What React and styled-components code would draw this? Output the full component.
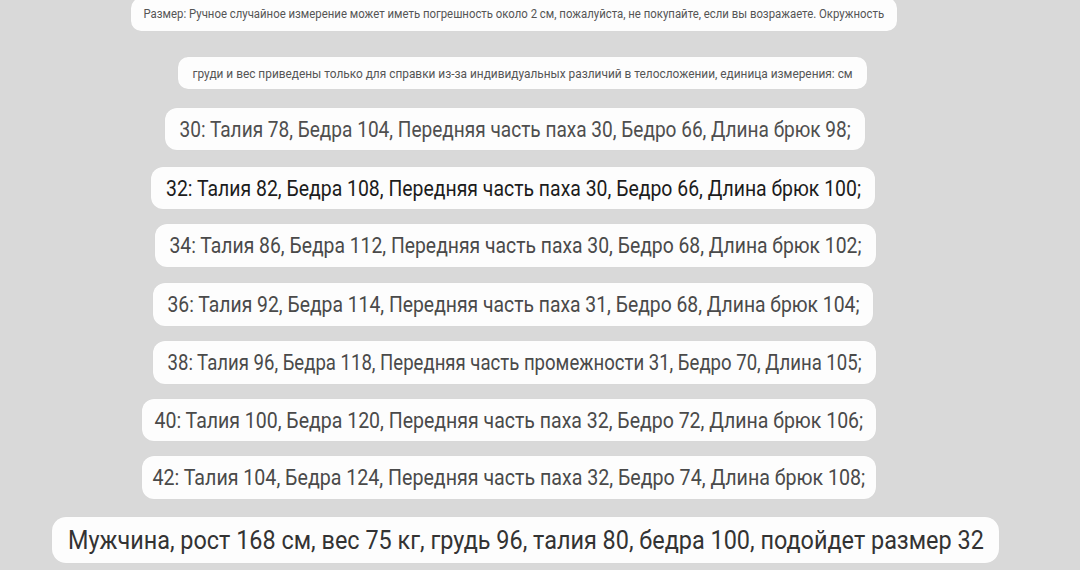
import React, { useLayoutEffect, useRef, useState } from "react";
import styled, { createGlobalStyle } from "styled-components";

const Global = createGlobalStyle`
  html, body { margin: 0; padding: 0; overflow: hidden; }
  body { background: #d9d9d9; font-family: Roboto, "Noto Sans", sans-serif; }
`;

const Page = styled.main`
  width: 1080px;
  height: 570px;
  display: flex;
  flex-direction: column;
  align-items: flex-start;
  background: #d9d9d9;
  overflow: hidden;
`;

const Pill = styled.div`
  margin-top: ${(p) => p.$mt}px;
  margin-left: ${(p) => p.$left}px;
  width: ${(p) => p.$w}px;
  height: ${(p) => p.$h}px;
  flex: none;
  box-sizing: border-box;
  background: #fdfdfd;
  border-radius: ${(p) => p.$r}px;
  display: flex;
  align-items: center;
  justify-content: center;
  box-shadow: 0 0 1px rgba(0, 0, 0, 0.06);
`;

const Label = styled.span`
  flex: none;
  white-space: nowrap;
  font-family: Roboto, "Noto Sans", sans-serif;
  font-size: ${(p) => p.$size}px;
  line-height: 1;
  color: ${(p) => p.$color};
  transform-origin: center center;
  display: inline-block;
`;

const rows = [
  { text: "Размер: Ручное случайное измерение может иметь погрешность около 2 см, пожалуйста, не покупайте, если вы возражаете. Окружность", left: 131, w: 766, mt: -2, h: 33, size: 12.5, tw: 741, color: "#555", r: 10 },
  { text: "груди и вес приведены только для справки из-за индивидуальных различий в телосложении, единица измерения: см", left: 178, w: 689, mt: 26, h: 32, size: 13, tw: 660, color: "#555", r: 10 },
  { text: "30: Талия 78, Бедра 104, Передняя часть паха 30, Бедро 66, Длина брюк 98;", left: 165, w: 700, mt: 19, h: 42, size: 22.5, tw: 671, color: "#4f4f4f", r: 12 },
  { text: "32: Талия 82, Бедра 108, Передняя часть паха 30, Бедро 66, Длина брюк 100;", left: 151, w: 724, mt: 17, h: 42, size: 22.5, tw: 695, color: "#1c1c1c", r: 12 },
  { text: "34: Талия 86, Бедра 112, Передняя часть паха 30, Бедро 68, Длина брюк 102;", left: 155, w: 721, mt: 15, h: 43, size: 22.5, tw: 692, color: "#4a4a4a", r: 12 },
  { text: "36: Талия 92, Бедра 114, Передняя часть паха 31, Бедро 68, Длина брюк 104;", left: 153, w: 720, mt: 16, h: 43, size: 22.5, tw: 692, color: "#4a4a4a", r: 12 },
  { text: "38: Талия 96, Бедра 118, Передняя часть промежности 31, Бедро 70, Длина 105;", left: 153, w: 723, mt: 15, h: 43, size: 22.5, tw: 694, color: "#4a4a4a", r: 12 },
  { text: "40: Талия 100, Бедра 120, Передняя часть паха 32, Бедро 72, Длина брюк 106;", left: 142, w: 734, mt: 15, h: 42, size: 22.5, tw: 709, color: "#4a4a4a", r: 12 },
  { text: "42: Талия 104, Бедра 124, Передняя часть паха 32, Бедро 74, Длина брюк 108;", left: 142, w: 734, mt: 15, h: 43, size: 22.5, tw: 713, color: "#4a4a4a", r: 12 },
  { text: "Мужчина, рост 168 см, вес 75 кг, грудь 96, талия 80, бедра 100, подойдет размер 32", left: 52, w: 947, mt: 18, h: 46, size: 25, tw: 916, color: "#333", r: 14 },
];

function Row({ row }) {
  const ref = useRef(null);
  const [scale, setScale] = useState(1);
  useLayoutEffect(() => {
    if (ref.current) {
      const natural = ref.current.offsetWidth;
      if (natural > 0) setScale(row.tw / natural);
    }
  }, [row.tw, row.text]);
  return (
    <Pill $mt={row.mt} $left={row.left} $w={row.w} $h={row.h} $r={row.r}>
      <Label ref={ref} $size={row.size} $color={row.color} style={{ transform: `scaleX(${scale})` }}>
        {row.text}
      </Label>
    </Pill>
  );
}

export default function App() {
  return (
    <>
      <Global />
      <Page>
        {rows.map((r, i) => (
          <Row key={i} row={r} />
        ))}
      </Page>
    </>
  );
}
